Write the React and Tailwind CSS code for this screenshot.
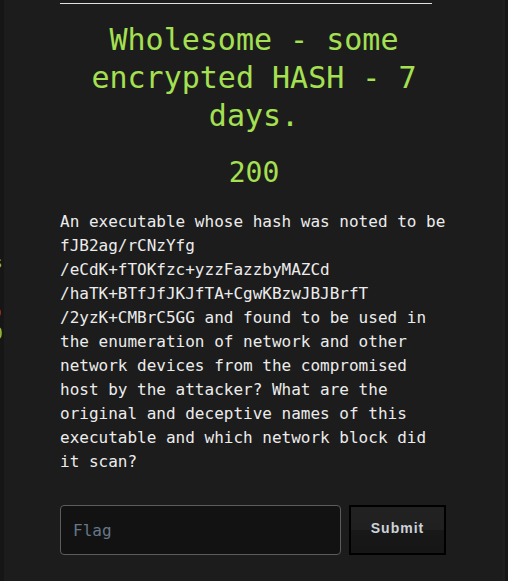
import React from "react";

const mono = { fontFamily: '"DejaVu Sans Mono", "Liberation Mono", monospace' };

const App = () => {
  return (
    <div className="min-h-screen h-[581px] overflow-hidden bg-[#161616] flex">
      {/* peek of the page behind the modal */}
      <div className="relative w-[4px] shrink-0 overflow-hidden" style={mono}>
        <span className="absolute left-[-7px] top-[251px] text-[16px] text-[#8fc43f]">s</span>
        <span className="absolute left-[-8px] top-[300px] text-[16px] text-[#a0442a]">o</span>
        <span className="absolute left-[-7px] top-[322px] text-[16px] text-[#8fc43f]">0</span>
      </div>

      <div className="w-[498px] shrink-0 bg-[#1c1c1c] pl-[56px]" style={mono}>
        <div className="w-[372px] mt-[3px] border-t border-[#e0e0e0]" />

        <div className="w-[388px]">
          <h2 className="mt-[17px] text-center text-[30px] leading-[38px] text-[#a5e052]">
            Wholesome - some encrypted HASH - 7 days.
          </h2>
          <h3 className="mt-[21px] text-center text-[28px] leading-[34px] text-[#a5e052]">200</h3>

          <p className="mt-[20px] text-[16px] leading-[24px] text-[#ececec]">
            An executable whose hash was noted to be fJB2ag/rCNzYfg
            <br />
            /eCdK+fTOKfzc+yzzFazzbyMAZCd
            <br />
            /haTK+BTfJfJKJfTA+CgwKBzwJBJBrfT
            <br />
            /2yzK+CMBrC5GG and found to be used in the enumeration of network and other network
            devices from the compromised host by the attacker? What are the original and deceptive
            names of this executable and which network block did it scan?
          </p>

          <div className="mt-[31px] flex gap-[8px] w-[386px]">
            <input
              type="text"
              placeholder="Flag"
              className="flex-1 min-w-0 h-[50px] rounded-[4px] border border-[#5c5c5c] bg-[#121212] px-[12px] text-[16px] text-[#ddd] placeholder:text-[#66778a] outline-none"
              style={mono}
            />
            <button
              type="button"
              className="w-[97px] h-[50px] pb-[3px] border-2 border-black bg-[linear-gradient(to_bottom,#222222_0%,#202020_50%,#181818_50%,#161616_100%)] text-[14px] font-bold tracking-[1px] text-[#cdd3d9]"
              style={{ fontFamily: '"Liberation Sans", Arial, sans-serif' }}
            >
              Submit
            </button>
          </div>
        </div>
      </div>

      <div className="w-[3px] shrink-0 bg-[#1f1f1f]" />
      <div className="flex-1 bg-[#161616]" />
    </div>
  );
};

export default App;
